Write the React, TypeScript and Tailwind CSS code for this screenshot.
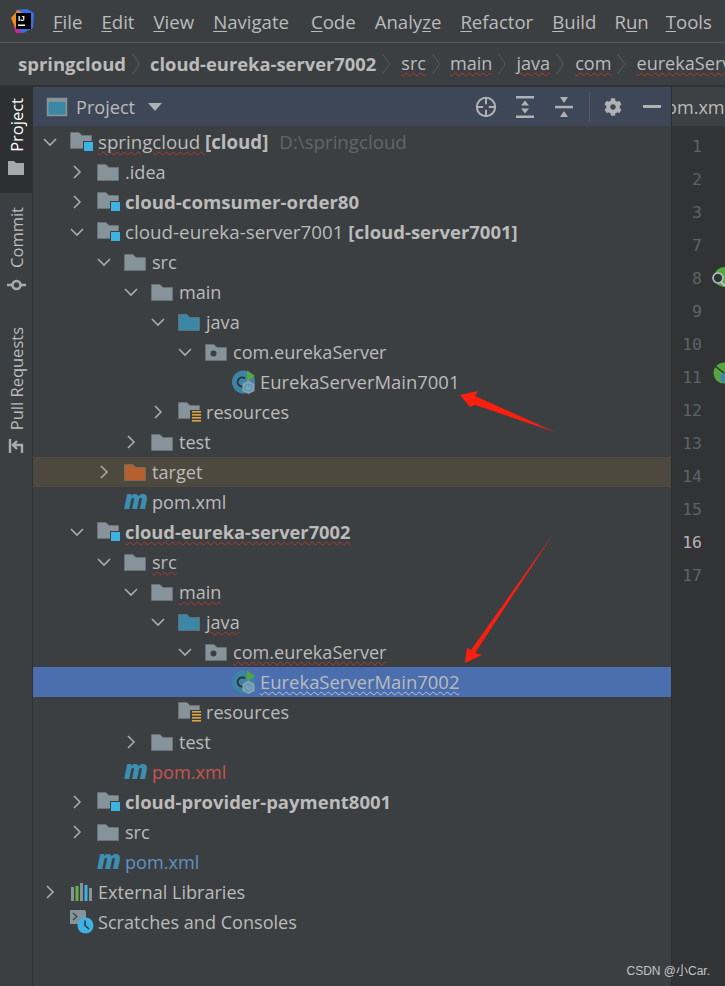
import React from "react";
import { FaCog } from "react-icons/fa";

const F = "#87939a";
const Folder = ({ color = F }: { color?: string }) => (
  <svg width="22" height="17" viewBox="0 0 22 17">
    <path d="M0.5 0.5H9L12 3.5H21.5V16.5H0.5Z" fill={color} stroke="#6e7a80" strokeWidth="0.6" />
  </svg>
);
const Module = () => (
  <svg width="24" height="20" viewBox="0 0 24 20">
    <path d="M0.5 0.5H9L12 3.5H21.5V16.5H0.5Z" fill={F} stroke="#6e7a80" strokeWidth="0.6" />
    <rect x="13" y="9" width="11" height="11" fill="#3c3f41" />
    <rect x="14" y="10" width="9" height="9" fill="#3db3e4" />
  </svg>
);
const Pkg = () => (
  <svg width="22" height="17" viewBox="0 0 22 17">
    <path d="M0.5 0.5H9L12 3.5H21.5V16.5H0.5Z" fill={F} stroke="#6e7a80" strokeWidth="0.6" />
    <circle cx="8.5" cy="9.5" r="3" fill="#3c3f41" />
  </svg>
);
const Resources = () => (
  <svg width="24" height="20" viewBox="0 0 24 20">
    <path d="M0.5 0.5H9L12 3.5H21.5V16.5H0.5Z" fill={F} stroke="#6e7a80" strokeWidth="0.6" />
    <rect x="12" y="8" width="12" height="12" fill="#3c3f41" />
    <rect x="14" y="9" width="9" height="1.6" fill="#e0a33e" />
    <rect x="14" y="12" width="9" height="1.6" fill="#e0a33e" />
    <rect x="14" y="15" width="9" height="1.6" fill="#e0a33e" />
    <rect x="14" y="18" width="9" height="1.6" fill="#e0a33e" />
  </svg>
);
const ClassIcon = () => (
  <svg width="26" height="24" viewBox="0 0 26 24">
    <circle cx="11.5" cy="12" r="11.5" fill="#3c84a6" />
    <path d="M13 8.5a4.5 4.5 0 1 0 0 7" fill="none" stroke="#2b3033" strokeWidth="1.8" />
    <path d="M15 0.5L23 6L15 11.5Z" fill="#57a53f" />
    <path d="M16.5 10.5L22.5 14V21L16.5 24L10.5 21V14Z" fill="#8fa0aa" />
    <circle cx="16.5" cy="17.5" r="3.4" fill="none" stroke="#3d9dca" strokeWidth="1.3" />
    <path d="M16.5 14.5V17.5" stroke="#3d9dca" strokeWidth="1.2" />
  </svg>
);
const Libs = () => (
  <svg width="24" height="20" viewBox="0 0 24 20">
    <rect x="1" y="5" width="3" height="14" fill={F} />
    <rect x="5.5" y="4" width="3" height="15" fill="#62b543" />
    <rect x="10" y="1" width="3" height="18" fill={F} />
    <rect x="14.5" y="3" width="3" height="16" fill="#3db3e4" />
    <rect x="19" y="6" width="3" height="13" fill={F} />
  </svg>
);
const Scratch = () => (
  <svg width="24" height="24" viewBox="0 0 24 24">
    <path d="M0 0H15L16 2V14H0Z" fill={F} />
    <path d="M3 3L7 6.5L3 10" fill="none" stroke="#3c3f41" strokeWidth="1.2" />
    <circle cx="15.5" cy="15.5" r="8" fill="#3db3e4" />
    <path d="M15 10.5V15.5L19 19" fill="none" stroke="#2f3436" strokeWidth="1.5" />
  </svg>
);

const Chevron = ({ open }: { open: boolean }) => (
  <svg width="18" height="18" viewBox="0 0 18 18" fill="none" stroke="#a9abad" strokeWidth="1.6">
    {open ? <path d="M3 6L9 12L15 6" /> : <path d="M6 3L12 9L6 15" />}
  </svg>
);

const Sq = ({ c, white }: { c: React.ReactNode; white?: boolean }) => (
  <span className={white ? "underline decoration-wavy decoration-[#b9c3d6] decoration-1 underline-offset-2" : "underline decoration-wavy decoration-[#b0392e] decoration-1 underline-offset-2"}>
    {c}
  </span>
);

const pad = ["pl-[8px]", "pl-[35px]", "pl-[62px]", "pl-[89px]", "pl-[116px]", "pl-[143px]", "pl-[170px]"];

type R = { l: number; o?: boolean; i: React.ReactNode; t: React.ReactNode; bg?: string };
const M = <span className="font-['Open_Sans'] font-extrabold italic text-[26px] leading-[20px] text-[#3d8fb2] -mt-[6px] block">m</span>;

const rows: R[] = [
  { l: 0, o: true, i: <Module />, t: <span className="text-[18.7px]"><Sq c="springcloud " /><b>[cloud]</b><span className="ml-[11px] text-[#62666a]">D:\springcloud</span></span> },
  { l: 1, o: false, i: <Folder />, t: ".idea" },
  { l: 1, o: false, i: <Module />, t: <b className="text-[18.65px]">cloud-comsumer-order80</b> },
  { l: 1, o: true, i: <Module />, t: <span className="text-[18.8px]">cloud-eureka-server7001 <b className="text-[18.5px]">[cloud-server7001]</b></span> },
  { l: 2, o: true, i: <Folder />, t: "src" },
  { l: 3, o: true, i: <Folder />, t: "main" },
  { l: 4, o: true, i: <Folder color="#3d87a6" />, t: "java" },
  { l: 5, o: true, i: <Pkg />, t: "com.eurekaServer" },
  { l: 6, i: <ClassIcon />, t: <span className="text-[18.45px]">EurekaServerMain7001</span> },
  { l: 4, o: false, i: <Resources />, t: "resources" },
  { l: 3, o: false, i: <Folder />, t: "test" },
  { l: 2, o: false, i: <Folder color="#b5602e" />, t: "target", bg: "bg-[#4d493e]" },
  { l: 2, i: M, t: "pom.xml" },
  { l: 1, o: true, i: <Module />, t: <b className="text-[18.3px]"><Sq c="cloud-eureka-server7002" /></b> },
  { l: 2, o: true, i: <Folder />, t: <Sq c="src" /> },
  { l: 3, o: true, i: <Folder />, t: <Sq c="main" /> },
  { l: 4, o: true, i: <Folder color="#3d87a6" />, t: <Sq c="java" /> },
  { l: 5, o: true, i: <Pkg />, t: <Sq c="com.eurekaServer" /> },
  { l: 6, i: <ClassIcon />, t: <span className="text-[18.45px]"><Sq white c="EurekaServerMain7002" /></span>, bg: "bg-[#4b6eaf]" },
  { l: 4, i: <Resources />, t: "resources" },
  { l: 3, o: false, i: <Folder />, t: "test" },
  { l: 2, i: M, t: <span className="text-[#c75450]">pom.xml</span> },
  { l: 1, o: false, i: <Module />, t: <b className="text-[18.5px]">cloud-provider-payment8001</b> },
  { l: 1, o: false, i: <Folder />, t: "src" },
  { l: 1, i: M, t: <span className="text-[#5f93c1]">pom.xml</span> },
  { l: 0, o: false, i: <Libs />, t: "External Libraries" },
  { l: 0, i: <Scratch />, t: "Scratches and Consoles" },
];

const menu: [string, string, string, string][] = [
  ["", "F", "ile", ""], ["", "E", "dit", ""], ["", "V", "iew", ""], ["", "N", "avigate", ""], ["", "C", "ode", "ml-[3px]"],
  ["Analy", "z", "e", ""], ["", "R", "efactor", ""], ["", "B", "uild", ""], ["R", "u", "n", "-ml-[1px]"], ["", "T", "ools", "-ml-[2px]"],
];

const Sep = () => (
  <svg width="8" height="22" viewBox="0 0 8 22" fill="none" stroke="#5a5d5f" strokeWidth="1" className="shrink-0 ml-[6px] mr-[10px]">
    <path d="M0.5 1L7.5 11L0.5 21" />
  </svg>
);

const V = ({ children }: { children: React.ReactNode }) => (
  <span className="[writing-mode:vertical-rl] rotate-180 leading-none ml-[3px]">{children}</span>
);

const nums: [string, boolean?][] = [["1"], ["2"], ["3"], ["7"], ["8"], ["9"], ["10"], ["11"], ["12"], ["13"], ["14"], ["15"], ["16", true], ["17"]];

export default function App() {
  return (
    <div className="relative w-[725px] h-[986px] overflow-hidden bg-[#3c3f41] text-[#bbbbbb] font-['Open_Sans',sans-serif] text-[18.1px]">
      {/* menu */}
      <div className="h-[43px] flex items-center border-b border-[#55585a] pt-[2px]">
        <svg width="24" height="24" viewBox="0 0 24 24" className="ml-[11px] mr-[18px] shrink-0 -mt-[2px]">
          <path d="M5 1L16 0L23 4L22 19L12 24L5 20Z" fill="#3b6ee8" />
          <path d="M0 9L7 1L14 6L5 21Z" fill="#f28a1e" />
          <path d="M2 17L12 24L5 24Z" fill="#c9268f" />
          <rect x="5" y="4" width="15" height="16" fill="#000" />
          <text x="7" y="12" fontSize="8" fontWeight="700" fill="#fff" fontFamily="Liberation Sans">IJ</text>
          <rect x="7" y="15.5" width="7" height="1.5" fill="#fff" />
        </svg>
        <div className="flex gap-[19px] text-[18.6px]">
          {menu.map(([a, u, b, m]) => (
            <span key={a + u + b} className={m}>{a}<span className="underline underline-offset-2">{u}</span>{b}</span>
          ))}
        </div>
      </div>
      {/* breadcrumb */}
      <div className="h-[44px] flex items-center pl-[18px] whitespace-nowrap border-b-2 border-[#2f3133]">
        <b className="text-[18.5px]">springcloud</b><Sep /><b className="text-[18.35px]">cloud-eureka-server7002</b><Sep />
        <span className="ml-[1px]"><Sq c="src" /></span><Sep />
        <Sq c="main" /><Sep />
        <Sq c="java" /><Sep />
        <span className="ml-[1px]"><Sq c="com" /></span><Sep />
        <span className="ml-[1px]"><Sq c="eurekaServer" /></span>
      </div>
      <div className="flex h-[899px]">
        {/* side tool strip */}
        <div className="w-[33px] shrink-0 border-r border-[#2f3133] flex flex-col items-center text-[16.5px]">
          <div className="w-full h-[106px] bg-[#2d2f30] text-white flex flex-col items-center pt-[11px] gap-[9px]">
            <V>Project</V>
            <svg width="16" height="14" viewBox="0 0 16 14"><path d="M0 0H6L8 2H16V14H0Z" fill="#a6a8a9" /></svg>
          </div>
          <div className="flex flex-col items-center mt-[14px] gap-[8px]">
            <V>Commit</V>
            <svg width="19" height="18" viewBox="0 0 19 18" fill="none" stroke="#a9abad" strokeWidth="2.6"><circle cx="9.5" cy="9" r="4" /><path d="M0 9H5M14 9H19" /></svg>
          </div>
          <div className="flex flex-col items-center mt-[33px] gap-[9px]">
            <V>Pull Requests</V>
            <svg width="16" height="14" viewBox="0 0 16 14" fill="none" stroke="#a9abad" strokeWidth="2.4"><path d="M2 0V14M14 14V6H5M9 2L5 6L9 10" /></svg>
          </div>
        </div>
        {/* project panel */}
        <div className="w-[638px] shrink-0 flex flex-col">
          <div className="h-[39px] bg-[#3d4757] flex items-center pl-[13px] pr-[10px]">
            <svg width="22" height="20" viewBox="0 0 22 20" className="mr-[8px]"><rect x="0.75" y="0.75" width="20.5" height="18.5" fill="#87939a" /><rect x="2.5" y="5" width="17" height="12.5" fill="#3d87a6" /></svg>
            <span className="pt-[2px]">Project</span>
            <svg width="14" height="8" viewBox="0 0 14 8" className="ml-[13px]"><path d="M0 0H14L7 8Z" fill="#afb1b3" /></svg>
            <div className="ml-auto flex items-center">
              <svg width="22" height="22" viewBox="0 0 24 24" fill="none" stroke="#afb1b3" strokeWidth="2.2" className="mr-[19px]"><circle cx="12" cy="12" r="10" /><path d="M12 2V9M12 15V22M2 12H9M15 12H22" /></svg>
              <svg width="18" height="22" viewBox="0 0 18 22" fill="#afb1b3" className="mr-[21px]"><rect x="0" y="0" width="18" height="2.5" /><rect x="0" y="19.5" width="18" height="2.5" /><path d="M9 4.5L13 9.5H5ZM9 17.5L13 12.5H5Z" /></svg>
              <svg width="18" height="22" viewBox="0 0 18 22" fill="#afb1b3" className="mr-[16px]"><rect x="0" y="9.8" width="18" height="2.5" /><path d="M5 1H13L9 7ZM5 21H13L9 15Z" /></svg>
              <div className="w-[1px] h-[30px] bg-[#55585a] mr-[14px]" />
              <FaCog size={18} color="#afb1b3" className="mr-[21px]" />
              <div className="w-[18px] h-[3px] bg-[#afb1b3]" />
            </div>
          </div>
          <div className="pt-[1px] whitespace-nowrap">
            {rows.map((r, i) => (
              <div key={i} className={`h-[30px] flex items-center ${pad[r.l]} ${r.bg ?? ""}`}>
                <span className="w-[27px] shrink-0 flex items-center">
                  {r.o === undefined ? null : <Chevron open={r.o} />}
                </span>
                <span className="w-[30px] pl-[2px] shrink-0 flex items-center">{r.i}</span>
                <span className="leading-[30px]">{r.t}</span>
              </div>
            ))}
          </div>
        </div>
        {/* editor */}
        <div className="flex-1 min-w-0 border-l border-[#2b2d2e] flex flex-col bg-[#313335]">
          <div className="h-[39px] bg-[#3e4143] overflow-hidden flex items-center whitespace-nowrap">
            <span className="-ml-[6px] pt-[2px]">om.xml</span>
          </div>
          <div className="w-[30px] flex flex-col items-end pt-[5px] font-['DejaVu_Sans_Mono',monospace] text-[16.5px] text-[#606366]">
            {nums.map(([n, cur]) => (
              <div key={n} className={`h-[33px] flex items-center ${cur ? "text-[#b5b5b5]" : ""}`}>{n}</div>
            ))}
          </div>
        </div>
      </div>

      {/* gutter markers */}
      <svg width="14" height="22" viewBox="0 0 14 22" className="absolute left-[711px] top-[266px]">
        <circle cx="13" cy="11" r="10" fill="#57a53f" />
        <circle cx="7" cy="12" r="5" fill="#313335" stroke="#b5c2cc" strokeWidth="1.6" />
        <path d="M10 16L14 20" stroke="#b5c2cc" strokeWidth="2" />
      </svg>
      <svg width="14" height="22" viewBox="0 0 14 22" className="absolute left-[711px] top-[362px]">
        <circle cx="13" cy="11" r="10.5" fill="#57a53f" />
        <path d="M4 4L14 12" stroke="#313335" strokeWidth="1.5" />
        <circle cx="14" cy="16" r="5" fill="#3d87a6" />
      </svg>

      {/* annotation arrows */}
      <svg width="725" height="986" viewBox="0 0 725 986" className="absolute inset-0 pointer-events-none">
        <polygon points="460,395 478,391 475,396 555,432 475,405 470,407" fill="#fb1f10" />
        <polygon points="554,533 475,653 482,655 465,663 467,648 471,650" fill="#fb1f10" />
      </svg>

      <div className="absolute right-[15px] bottom-[9px] text-[12px] leading-none text-[#c5c6c7] font-['Liberation_Sans','Noto_Sans_CJK_SC',sans-serif]">CSDN @小Car.</div>
    </div>
  );
}
